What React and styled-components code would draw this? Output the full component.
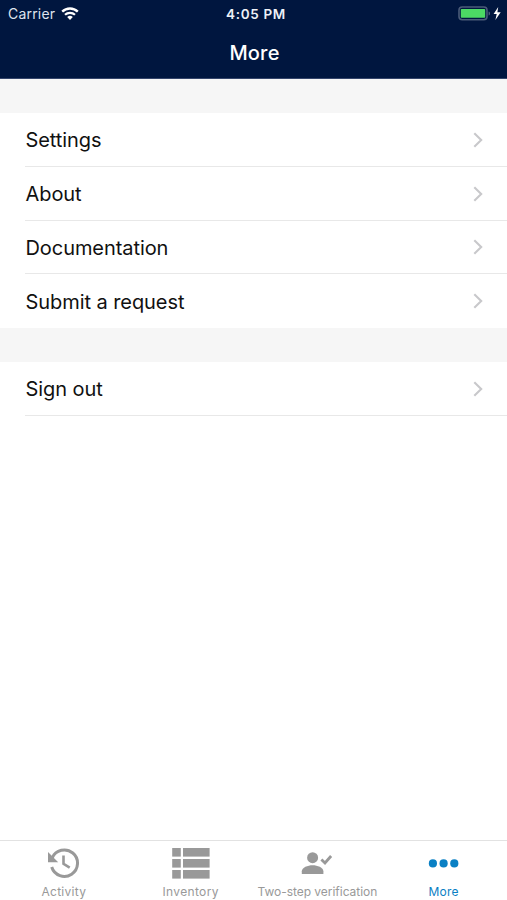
import { useState } from "react";
import styled, { createGlobalStyle } from "styled-components";

const GlobalStyle = createGlobalStyle`
  * {
    box-sizing: border-box;
  }
  body {
    margin: 0;
    font-family: Inter, "Liberation Sans", sans-serif;
    background: #fff;
  }
`;

const Screen = styled.div`
  display: flex;
  flex-direction: column;
  width: 100%;
  height: 100vh;
  background: #fff;
  overflow: hidden;
`;

const Header = styled.header`
  height: 79px;
  background: #00163f;
  border-bottom: 1px solid #34456b;
  color: #fff;
`;

const StatusBar = styled.div`
  display: grid;
  grid-template-columns: 1fr auto 1fr;
  align-items: center;
  height: 27px;
  padding: 0 5px 0 8px;
`;

const Carrier = styled.div`
  display: flex;
  align-items: center;
  gap: 6px;
  font-size: 14px;
  letter-spacing: 0.2px;
  color: #dfe4ee;
`;

const Time = styled.div`
  padding-left: 2px;
  font-size: 13.5px;
  font-weight: 600;
  letter-spacing: 0.65px;
  color: #eef1f7;
`;

const Power = styled.div`
  display: flex;
  justify-content: flex-end;
`;

const Title = styled.h1`
  margin: 0;
  padding: 1px 0 0 2px;
  font-size: 20px;
  font-weight: 500;
  letter-spacing: 0.2px;
  line-height: 50px;
  text-align: center;
`;

const Content = styled.main`
  flex: 1;
`;

const Gap = styled.div`
  height: 34px;
  background: #f6f6f6;
`;

const Group = styled.div`
  display: flex;
  flex-direction: column;
`;

const Row = styled.div`
  display: flex;
  align-items: center;
  justify-content: space-between;
  height: ${(props) => props.$height}px;
  margin-left: 25px;
  padding-right: 24.5px;
  border-bottom: ${(props) => (props.$divider ? "1px solid #e8e8e8" : "none")};
  font-size: 20px;
  letter-spacing: -0.07px;
  color: #111;
  cursor: pointer;
`;

const RowLabel = styled.span`
  padding: 1px 0 0 0.5px;
`;

const TabBar = styled.nav`
  display: grid;
  grid-template-columns: repeat(4, 1fr);
  height: 60px;
  border-top: 1px solid #e2e2e2;
  background: #fff;
`;

const Tab = styled.div`
  display: flex;
  flex-direction: column;
  align-items: center;
  padding: 6px 0 0 ${(props) => (props.$active ? 0 : 1)}px;
  font-size: 12px;
  line-height: 14px;
  letter-spacing: ${(props) => props.$spacing}px;
  white-space: nowrap;
  color: ${(props) => (props.$active ? "#0a80c4" : "#999")};
  cursor: pointer;

  & svg {
    display: block;
    margin-bottom: 6px;
  }
`;

const WifiIcon = () => (
  <svg width="18" height="14" viewBox="0 0 18 14" fill="none" stroke="#fff">
    <path d="M1.2 4.6a11.2 11.2 0 0 1 15.6 0" strokeWidth="2.4" />
    <path d="M4 7.8a7.2 7.2 0 0 1 10 0" strokeWidth="2.2" />
    <path d="M9 12.9 6.2 10.1a4 4 0 0 1 5.6 0z" fill="#fff" stroke="none" />
  </svg>
);

const BatteryIcon = () => (
  <svg width="44" height="16" viewBox="0 0 44 16">
    <rect x="1" y="1" width="28" height="12.8" rx="3.2" fill="none" stroke="#4a5b78" strokeWidth="1.6" />
    <rect x="2.8" y="3" width="24.4" height="8.8" rx="0.8" fill="#4cd964" />
    <path d="M30.7 5.4c1.5.4 1.5 3.6 0 4z" fill="#66748e" />
    <path d="M40.2 1 35.6 8h3.1l-1.3 6 5.3-7.7h-3.3z" fill="#fff" />
  </svg>
);

const Chevron = () => (
  <svg width="10" height="16" viewBox="0 0 10 16" fill="none">
    <path d="M1.3 1.2 8.2 8l-6.9 6.8" stroke="#c8c8cb" strokeWidth="2.1" />
  </svg>
);

const ActivityIcon = () => (
  <svg width="38" height="32" viewBox="0 0 38 32" fill="none" stroke="#999">
    <path d="M7.2 10.9A13.2 13.2 0 1 1 6.7 20" strokeWidth="3" />
    <path d="M3 5v10.2h10.2z" fill="#999" stroke="none" />
    <path d="M18.5 8.5v8.3l6.2 3.9" strokeWidth="2.6" />
  </svg>
);

const InventoryIcon = () => (
  <svg width="38" height="32" viewBox="0 0 38 32" fill="#999">
    {[1, 12, 23].map((y) => (
      <g key={y}>
        <rect x="0.2" y={y} width="8.6" height="8.6" />
        <rect x="11" y={y} width="26.6" height="8.6" />
      </g>
    ))}
  </svg>
);

const VerificationIcon = () => (
  <svg width="38" height="32" viewBox="0 0 38 32" fill="#999">
    <circle cx="14.6" cy="10.7" r="5.5" />
    <path d="M3.8 27v-2.7c0-3.9 6-6.1 10.8-6.1s10.8 2.2 10.8 6.1V27z" />
    <path d="m23.4 12.4 3.6 3.5 6.1-6.9" fill="none" stroke="#999" strokeWidth="2.8" />
  </svg>
);

const MoreIcon = () => (
  <svg width="38" height="32" viewBox="0 0 38 32" fill="#0a80c4">
    <circle cx="7.9" cy="16.4" r="4.1" />
    <circle cx="18.6" cy="16.4" r="4.1" />
    <circle cx="29.3" cy="16.4" r="4.1" />
  </svg>
);

const TABS = [
  { name: "Activity", icon: ActivityIcon, spacing: 0.3 },
  { name: "Inventory", icon: InventoryIcon, spacing: 0.35 },
  { name: "Two-step verification", icon: VerificationIcon, spacing: -0.03 },
  { name: "More", icon: MoreIcon, spacing: 0.2 },
];

const MenuRow = (props) => (
  <Row $height={props.height} $divider={props.divider}>
    <RowLabel>{props.label}</RowLabel>
    <Chevron />
  </Row>
);

const App = () => {
  const [active, setActive] = useState("More");

  return (
    <Screen>
      <GlobalStyle />
      <Header>
        <StatusBar>
          <Carrier>
            Carrier
            <WifiIcon />
          </Carrier>
          <Time>4:05 PM</Time>
          <Power>
            <BatteryIcon />
          </Power>
        </StatusBar>
        <Title>More</Title>
      </Header>
      <Content>
        <Gap />
        <Group>
          <MenuRow label="Settings" height={54} divider />
          <MenuRow label="About" height={54} divider />
          <MenuRow label="Documentation" height={53} divider />
          <MenuRow label="Submit a request" height={54} />
        </Group>
        <Gap />
        <Group>
          <MenuRow label="Sign out" height={54} divider />
        </Group>
      </Content>
      <TabBar>
        {TABS.map(({ name, icon: Icon, spacing }) => (
          <Tab
            key={name}
            $active={name === active}
            $spacing={spacing}
            onClick={() => setActive(name)}
          >
            <Icon />
            {name}
          </Tab>
        ))}
      </TabBar>
    </Screen>
  );
};

export default App;
